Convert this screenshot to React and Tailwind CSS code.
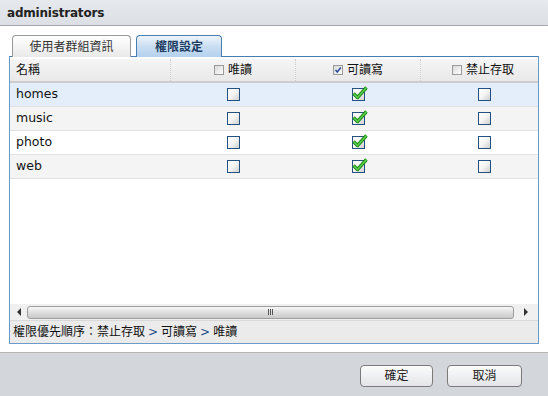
const rows = [
  { name: 'homes', bg: 'bg-[#e3eefa]' },
  { name: 'music', bg: 'bg-[#f4f4f4]' },
  { name: 'photo', bg: 'bg-white' },
  { name: 'web', bg: 'bg-[#f4f4f4]' },
];

function Box({ checked }) {
  return (
    <span className="relative inline-block w-[13px] h-[13px] border border-[#24517f] bg-linear-to-br from-white via-[#f4f4f4] to-[#cfcfcf]">
      {checked && (
        <svg className="absolute -top-[3px] -left-[1px] w-[16px] h-[14px]" viewBox="0 0 16 14">
          <path d="M1.5 7.5 L5.5 11.5 L14.5 1.5" stroke="#1f8a1c" strokeWidth="3.4" fill="none" strokeLinejoin="round" />
          <path d="M1.5 7.5 L5.5 11.5 L14.5 1.5" stroke="#5fcf4f" strokeWidth="1.4" fill="none" strokeLinejoin="round" />
        </svg>
      )}
    </span>
  );
}

function SmallBox({ checked }) {
  return (
    <span className="relative inline-block w-[10px] h-[10px] border border-[#9a9a9a] bg-linear-to-br from-[#d8d8d8] to-white">
      {checked && (
        <svg className="absolute inset-0 w-[8px] h-[8px]" viewBox="0 0 8 8">
          <path d="M1.5 4 L3.3 6 L6.8 1.5" stroke="#2a4a9a" strokeWidth="1.5" fill="none" />
        </svg>
      )}
    </span>
  );
}

function Head({ label, checked }) {
  return (
    <div className="w-[125px] shrink-0 flex items-center justify-center gap-[4px] border-r border-dotted border-[#cfcfcf]">
      <SmallBox checked={checked} />
      <span>{label}</span>
    </div>
  );
}

export default function App() {
  return (
    <div className="w-[548px] h-[396px] flex flex-col font-['DejaVu_Sans','Noto_Sans_CJK_TC',sans-serif] text-[12px] text-[#111] bg-white overflow-hidden">
      {/* title */}
      <div className="h-[26px] shrink-0 flex items-center px-[7px] bg-linear-to-b from-[#e6e9ed] to-[#dcdfe3] border-b border-[#a8a8a8]">
        <span className="font-bold text-[12px] text-[#222] tracking-[-0.2px]">administrators</span>
      </div>

      {/* body */}
      <div className="flex-1 flex flex-col pt-[8px] px-[9px] pb-[8px]">
        {/* tabs */}
        <div className="h-[23px] flex items-end gap-[5px] pl-[3px] relative z-10 -mb-[1px]">
          <div className="h-[22px] w-[119px] flex items-center justify-center rounded-t-[4px] border border-b-0 border-[#9a9a9a] bg-linear-to-b from-white to-[#e9e9e9] text-[#333]">
            使用者群組資訊
          </div>
          <div className="h-[22px] w-[86px] flex items-center justify-center rounded-t-[4px] border border-b-0 border-[#4a7db0] bg-linear-to-b from-[#eef5fc] via-[#c9def2] to-[#b5d1ee] font-bold text-[#1d3c62]">
            權限設定
          </div>
        </div>

        {/* panel */}
        <div className="flex-1 flex flex-col border border-[#6b9bc9] border-t-[#4a7db0] overflow-hidden">
          <div className="flex-1 overflow-hidden pt-[2px]">
            <div className="w-[537px]">
              <div className="h-[24px] flex bg-linear-to-b from-[#f5f5f5] to-[#e9e9e9] border-b-2 border-[#cdcdcd]">
                <div className="w-[161px] shrink-0 flex items-center pl-[6px] border-r border-dotted border-[#cfcfcf]">名稱</div>
                <Head label="唯讀" />
                <Head label="可讀寫" checked />
                <Head label="禁止存取" />
              </div>
              {rows.map((r) => (
                <div key={r.name} className={`h-[24px] flex items-center border-b border-[#e2e2e2] text-[12.5px] ${r.bg}`}>
                  <div className="w-[161px] shrink-0 pl-[6px]">{r.name}</div>
                  <div className="w-[125px] shrink-0 flex justify-center"><Box /></div>
                  <div className="w-[125px] shrink-0 flex justify-center"><Box checked /></div>
                  <div className="w-[126px] shrink-0 flex justify-center"><Box /></div>
                </div>
              ))}
            </div>
          </div>

          {/* scrollbar */}
          <div className="h-[16px] shrink-0 flex items-center bg-[#f0f0f0]">
            <div className="w-[17px] flex justify-center">
              <span className="w-0 h-0 border-y-[4px] border-y-transparent border-r-[4px] border-r-[#333]" />
            </div>
            <div className="flex-1 h-[13px] rounded-[3px] border border-[#9d9d9d] bg-linear-to-b from-[#f7f7f7] via-[#dedede] to-[#c9c9c9] flex items-center justify-center">
              <span className="flex gap-[1px]">
                <span className="w-[1px] h-[6px] bg-[#555]" />
                <span className="w-[1px] h-[6px] bg-[#555]" />
                <span className="w-[1px] h-[6px] bg-[#555]" />
              </span>
            </div>
            <div className="w-[24px] flex justify-center">
              <span className="w-0 h-0 border-y-[4px] border-y-transparent border-l-[4px] border-l-[#333]" />
            </div>
          </div>

          {/* status */}
          <div className="h-[23px] shrink-0 flex items-center px-[3px] bg-[#ebebeb] border-t border-[#d9d9d9] text-[#111]">
            權限優先順序：禁止存取 <span className="mx-[3px] text-[#1c4a8a]">&gt;</span> 可讀寫 <span className="mx-[3px] text-[#1c4a8a]">&gt;</span> 唯讀
          </div>
        </div>
      </div>

      {/* footer */}
      <div className="h-[44px] shrink-0 flex items-start justify-end gap-[14px] pt-[12px] pr-[26px] bg-[#d3d7db] border-t border-[#b5b5b5]">
        <button className="w-[73px] h-[22px] rounded-[4px] border border-[#7a7a7a] bg-linear-to-b from-[#fbfbfb] to-[#e3e5e8] text-[#222]">確定</button>
        <button className="w-[75px] h-[22px] rounded-[4px] border border-[#7a7a7a] bg-linear-to-b from-[#fbfbfb] to-[#e3e5e8] text-[#222]">取消</button>
      </div>
    </div>
  );
}
